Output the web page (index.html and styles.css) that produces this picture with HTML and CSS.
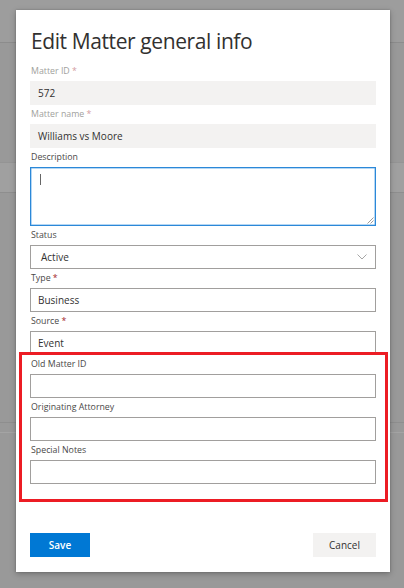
FILE: index.html
```html
<!DOCTYPE html>
<html lang="en">
<head>
<meta charset="utf-8">
<title>Edit Matter general info</title>
<link rel="stylesheet" href="styles.css">
</head>
<body>
<div class="page">
  <div class="page-header"></div>
  <div class="page-gap1"></div>
  <div class="page-band"></div>
  <div class="page-gap2"></div>
  <div class="page-band2"></div>
</div>
<div class="overlay">
  <div class="dialog">
    <h1 class="title">Edit Matter general info</h1>
    <div class="fields">
      <div class="field">
        <div class="label disabled">Matter ID <span class="req">*</span></div>
        <div class="input readonly">572</div>
      </div>
      <div class="field">
        <div class="label disabled">Matter name <span class="req">*</span></div>
        <div class="input readonly">Williams vs Moore</div>
      </div>
      <div class="field">
        <div class="label">Description</div>
        <div class="textarea"><span class="caret"></span>
          <svg class="grip" width="8" height="8" viewBox="0 0 8 8"><path d="M7.5 1.5L1.5 7.5M7.5 4.5L4.5 7.5" stroke="#9a9a9a" stroke-width="1" fill="none"/></svg>
        </div>
      </div>
      <div class="field">
        <div class="label">Status</div>
        <div class="input select"><span class="sel-text">Active</span>
          <svg class="chev" width="10" height="6" viewBox="0 0 10 6"><path d="M0.5 0.5L5 5L9.5 0.5" stroke="#a6a6a6" stroke-width="1" fill="none"/></svg>
        </div>
      </div>
      <div class="field">
        <div class="label">Type <span class="req">*</span></div>
        <div class="input">Business</div>
      </div>
      <div class="field">
        <div class="label">Source <span class="req">*</span></div>
        <div class="input">Event</div>
      </div>
      <div class="field">
        <div class="label">Old Matter ID</div>
        <div class="input"></div>
      </div>
      <div class="field">
        <div class="label">Originating Attorney</div>
        <div class="input"></div>
      </div>
      <div class="field">
        <div class="label">Special Notes</div>
        <div class="input"></div>
      </div>
    </div>
    <div class="actions">
      <button class="btn primary">Save</button>
      <button class="btn secondary">Cancel</button>
    </div>
    <div class="highlight"></div>
  </div>
</div>
</body>
</html>
```

FILE: styles.css
```css
* { box-sizing: border-box; }
html, body { margin: 0; padding: 0; }
body {
  width: 404px;
  height: 588px;
  overflow: hidden;
  background: #999999;
  font-family: "Open Sans", "Noto Sans", sans-serif;
  position: relative;
}
.page { display: flex; flex-direction: column; }
.page-header { height: 43px; background: #9d9d9d; border-bottom: 1px solid #8c8c8c; }
.page-gap1 { height: 119px; }
.page-band { height: 31px; background: #a0a0a0; border-top: 1px solid #949494; border-bottom: 1px solid #8e8e8e; }
.page-gap2 { height: 229px; }
.page-band2 { height: 11px; border-top: 1px solid #8e8e8e; border-bottom: 1px solid #a4a4a4; }

.overlay {
  position: absolute;
  inset: 0;
  padding: 10px 14px 0 16px;
}
.dialog {
  position: relative;
  width: 374px;
  height: 562px;
  background: #ffffff;
  box-shadow: 0 2px 6px rgba(0,0,0,0.25), 0 0 2px rgba(0,0,0,0.2);
  padding: 15px 14px 15px 14px;
  display: flex;
  flex-direction: column;
}
.title {
  margin: 0 0 5px 1px;
  font-size: 21px;
  letter-spacing: -0.4px;
  line-height: 32px;
  font-weight: 400;
  color: #323130;
}
.fields { display: flex; flex-direction: column; }
.field { display: flex; flex-direction: column; }
.label {
  height: 19px;
  line-height: 19px;
  font-size: 8.8px;
  color: #4a4948;
  padding-left: 1px;
}
.label.disabled { color: #a19f9d; }
.req { color: #a4262c; }
.label.disabled .req { color: #d39c9f; }
.input {
  height: 24px;
  border: 1px solid #a19f9d;
  font-size: 10px;
  line-height: 22px;
  color: #323130;
  padding: 0 7px;
}
.input.readonly { background: #f3f2f1; border-color: #f3f2f1; }
.select { display: flex; align-items: center; justify-content: space-between; padding: 0 8px 0 10px; }
.chev { display: block; }
.textarea {
  position: relative;
  height: 59px;
  border: 1px solid #2b88d8;
  box-shadow: inset 0 0 0 0.5px #6cb0ea;
}
.caret {
  position: absolute;
  left: 9px;
  top: 6px;
  width: 1px;
  height: 11px;
  background: #666;
}
.grip { position: absolute; right: 1px; bottom: 1px; }
.actions {
  margin-top: auto;
  display: flex;
  justify-content: space-between;
}
.btn {
  height: 24px;
  border: none;
  font-family: inherit;
  font-size: 10px;
  padding: 0;
  cursor: pointer;
}
.primary { width: 60px; background: #0078d4; color: #fff; font-weight: 600; }
.secondary { width: 63px; background: #f3f2f1; color: #323130; }
.highlight {
  position: absolute;
  left: 3px;
  top: 342px;
  width: 369px;
  height: 150px;
  border: 3px solid #ec1c24;
  pointer-events: none;
}
```
